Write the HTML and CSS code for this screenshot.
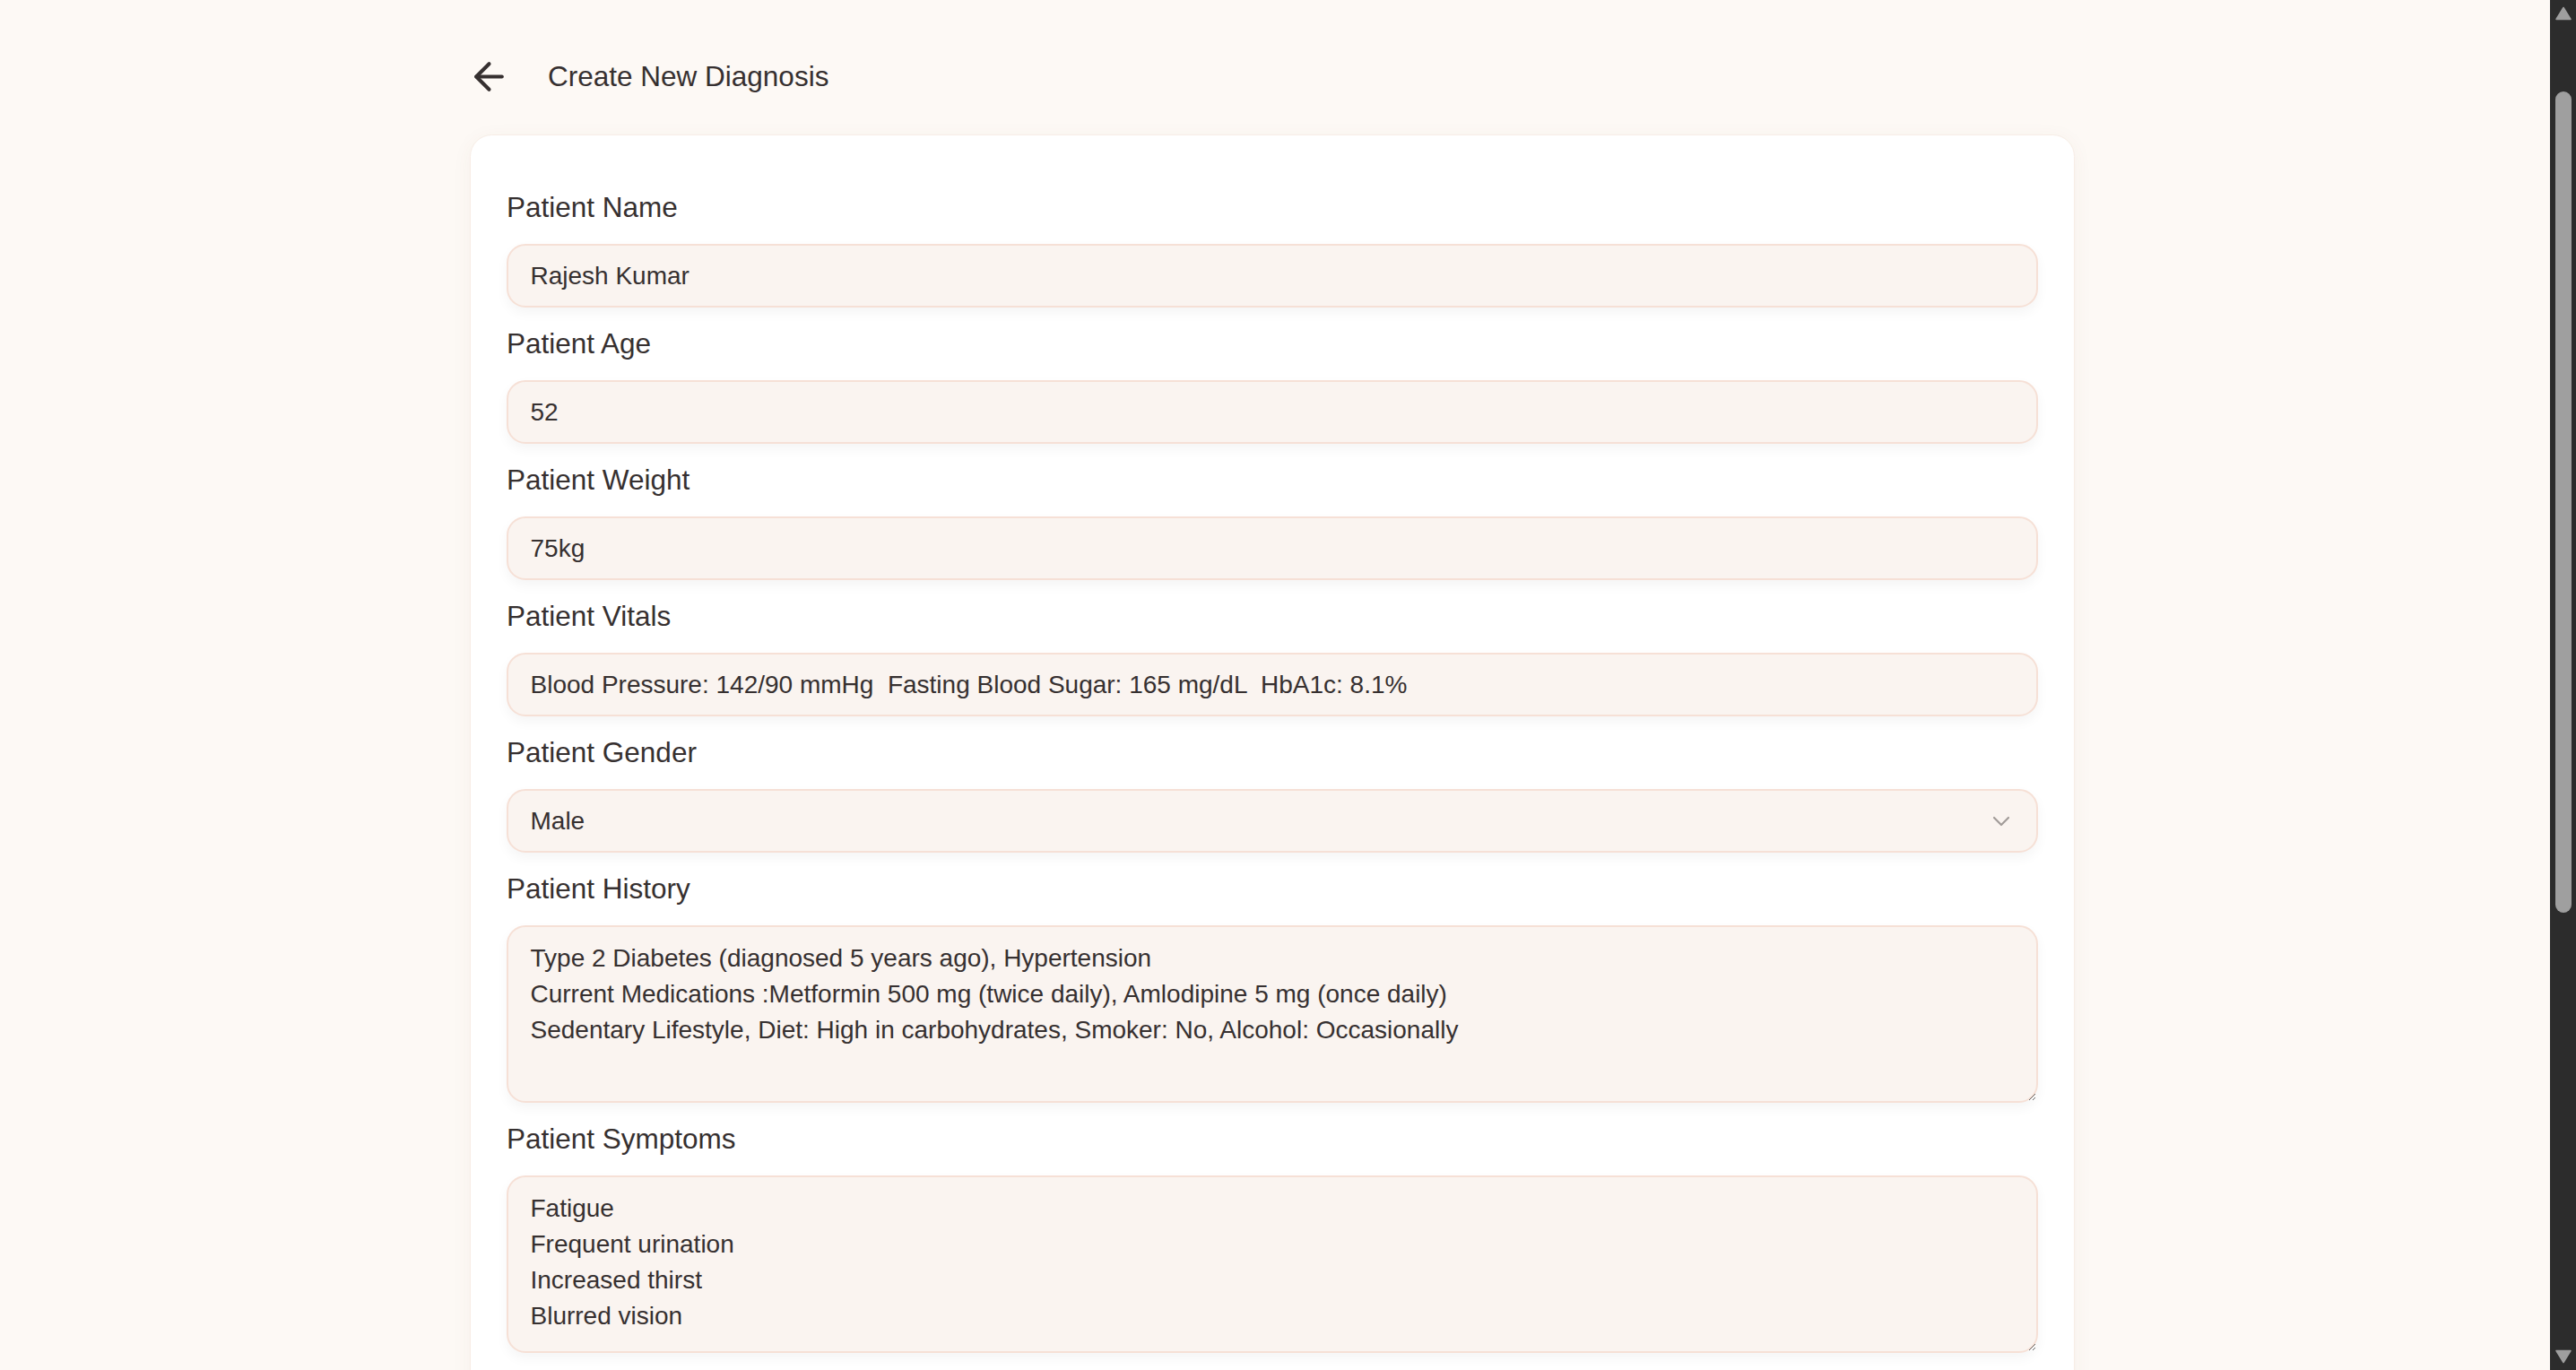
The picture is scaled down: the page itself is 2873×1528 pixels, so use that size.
FILE: index.html
```html
<!DOCTYPE html>
<html lang="en">
<head>
<meta charset="utf-8">
<title>Create New Diagnosis</title>
<link rel="stylesheet" href="styles.css">
</head>
<body>
<div class="viewport" id="viewport">
<main class="page">
  <header class="page-header">
    <button class="back-btn" type="button" aria-label="Back">
      <svg viewBox="0 0 24 24" width="49" height="49" fill="none" stroke="currentColor" stroke-width="2" stroke-linecap="round" stroke-linejoin="round"><path d="m12 19-7-7 7-7"/><path d="M19 12H5"/></svg>
    </button>
    <h1 class="page-title">Create New Diagnosis</h1>
  </header>

  <form class="card">
    <div class="field">
      <label class="field-label" for="p-name">Patient Name</label>
      <input class="field-input" id="p-name" type="text" value="Rajesh Kumar">
    </div>
    <div class="field">
      <label class="field-label" for="p-age">Patient Age</label>
      <input class="field-input" id="p-age" type="text" value="52">
    </div>
    <div class="field">
      <label class="field-label" for="p-weight">Patient Weight</label>
      <input class="field-input" id="p-weight" type="text" value="75kg">
    </div>
    <div class="field">
      <label class="field-label" for="p-vitals">Patient Vitals</label>
      <input class="field-input" id="p-vitals" type="text" value="Blood Pressure: 142/90 mmHg  Fasting Blood Sugar: 165 mg/dL  HbA1c: 8.1%">
    </div>
    <div class="field">
      <label class="field-label" for="p-gender">Patient Gender</label>
      <div class="select-wrap">
        <select class="field-input field-select" id="p-gender">
          <option selected>Male</option>
          <option>Female</option>
          <option>Other</option>
        </select>
        <svg class="select-chevron" viewBox="0 0 24 24" width="32" height="32" fill="none" stroke="currentColor" stroke-width="1.6" stroke-linecap="round" stroke-linejoin="round"><path d="m6 9 6 6 6-6"/></svg>
      </div>
    </div>
    <div class="field">
      <label class="field-label" for="p-history">Patient History</label>
      <textarea class="field-input field-textarea" id="p-history">Type 2 Diabetes (diagnosed 5 years ago), Hypertension
Current Medications :Metformin 500 mg (twice daily), Amlodipine 5 mg (once daily)
Sedentary Lifestyle, Diet: High in carbohydrates, Smoker: No, Alcohol: Occasionally</textarea>
    </div>
    <div class="field">
      <label class="field-label" for="p-symptoms">Patient Symptoms</label>
      <textarea class="field-input field-textarea" id="p-symptoms">Fatigue
Frequent urination
Increased thirst
Blurred vision</textarea>
    </div>
    <div class="field">
      <label class="field-label" for="p-allergies">Patient Allergies</label>
      <input class="field-input" id="p-allergies" type="text" value="None known">
    </div>
    <div class="field">
      <label class="field-label" for="p-notes">Additional Notes</label>
      <textarea class="field-input field-textarea" id="p-notes"></textarea>
    </div>
    <button class="submit-btn" type="submit">Generate Diagnosis</button>
  </form>
</main>
</div>
<aside class="scrollbar" aria-hidden="true">
  <div class="sb-btn">
    <svg viewBox="0 0 29 29" width="29" height="29"><polygon points="7,21.5 15,8.5 23,21.5" fill="#9f9f9f" stroke="#9f9f9f" stroke-width="1.5" stroke-linejoin="round"/></svg>
  </div>
  <div class="sb-track">
    <div class="sb-thumb" style="margin-top: 73px; height: 916px;"></div>
  </div>
  <div class="sb-btn">
    <svg viewBox="0 0 29 29" width="29" height="29"><polygon points="7,7.5 23,7.5 15,20.5" fill="#9f9f9f" stroke="#9f9f9f" stroke-width="1.5" stroke-linejoin="round"/></svg>
  </div>
</aside>
<script src="script.js"></script>
</body>
</html>
```

FILE: styles.css
```css
* {
  box-sizing: border-box;
}

html,
body {
  height: 100%;
  overflow: hidden;
}

body {
  display: flex;
  margin: 0;
  background: #fdf9f5;
  color: #363030;
  font-family: "Liberation Sans", Arial, sans-serif;
}

.viewport {
  flex: 1;
  min-width: 0;
  height: 100vh;
  overflow-y: scroll;
  overflow-x: hidden;
  padding-right: 6px;
  background: #fdf9f5;
  scrollbar-width: none;
}

.viewport::-webkit-scrollbar {
  display: none;
}

.scrollbar {
  display: flex;
  flex-direction: column;
  flex: 0 0 29px;
  width: 29px;
  height: 100vh;
  background: #2c2c2c;
}

.sb-btn {
  flex: 0 0 29px;
  height: 29px;
}

.sb-btn svg {
  display: block;
}

.sb-track {
  flex: 1;
  padding: 0 5px 0 6px;
}

.sb-thumb {
  width: 18px;
  border-radius: 9px;
  background: #9f9f9f;
}

.page {
  width: 1790px;
  margin: 0 auto;
  padding: 182.5px 0 208px;
}

.page-header {
  display: flex;
  align-items: center;
  gap: 41px;
  height: 49px;
  margin: 0 0 40.5px -3px;
}

.back-btn {
  display: flex;
  width: 49px;
  height: 49px;
  padding: 0;
  border: 0;
  background: none;
  color: #363030;
  cursor: pointer;
}

.page-title {
  margin: 0;
  font-size: 31.5px;
  line-height: 37px;
  font-weight: 400;
  color: #363030;
}

.card {
  display: flex;
  flex-direction: column;
  gap: 22px;
  background: #ffffff;
  border: 1px solid #f8ede6;
  border-radius: 24.5px;
  padding: 62px 40px 62px;
  box-shadow: 0 4px 22px rgba(120, 80, 60, 0.05);
}

.field {
  display: flex;
  flex-direction: column;
  gap: 22px;
}

.field-label {
  display: block;
  font-size: 31.5px;
  line-height: 37px;
  color: #363030;
}

.field-input {
  display: block;
  width: 100%;
  height: 71px;
  margin: 0;
  padding: 0 24.5px;
  border: 2px solid #f6e0d6;
  border-radius: 21px;
  background: #faf4f0;
  color: #363030;
  font-family: "Liberation Sans", Arial, sans-serif;
  font-size: 28px;
  outline: none;
  box-shadow: 0 6px 14px rgba(0, 0, 0, 0.045);
}

.field-textarea {
  height: 198px;
  padding: 15px 24.5px 11px;
  line-height: 40px;
  resize: vertical;
}

.select-wrap {
  position: relative;
}

.field-select {
  appearance: none;
  -webkit-appearance: none;
  cursor: pointer;
}

.select-chevron {
  position: absolute;
  right: 25px;
  top: 50%;
  transform: translateY(-50%);
  color: #a19b98;
  pointer-events: none;
}

.submit-btn {
  margin-top: 20px;
  height: 77px;
  border: 0;
  border-radius: 21px;
  background: #363030;
  color: #ffffff;
  font-family: "Liberation Sans", Arial, sans-serif;
  font-size: 28px;
}
```

FILE: script.js
```js
(function () {
  var vp = document.getElementById('viewport');
  function place() {
    vp.scrollTop = 122;
  }
  place();
  window.addEventListener('load', place);
})();
```
